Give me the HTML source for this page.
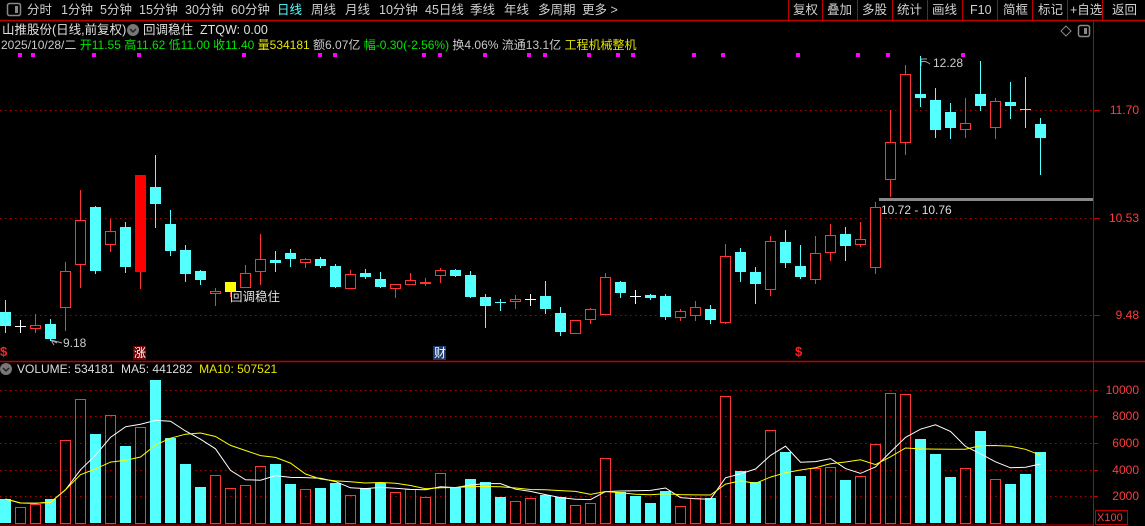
<!DOCTYPE html>
<html><head><meta charset="utf-8">
<style>
*{margin:0;padding:0;box-sizing:border-box}
body{width:1145px;height:526px;background:#000;overflow:hidden;position:relative;font-family:"Liberation Sans","Noto Sans CJK SC",sans-serif;color:#c8c8c8}
.t{position:absolute;white-space:nowrap;font-size:12px;line-height:14px}
.m{position:absolute;top:3px;font-size:12.5px;line-height:14px;color:#d0d0d0;white-space:nowrap}
.g{color:#00e600}.y{color:#e6e600}.w{color:#e0e0e0}
.ax{position:absolute;color:#ff3c3c;font-size:12px;text-align:right;width:45px;right:6px}
</style></head><body>
<svg width="1145" height="526" style="position:absolute;left:0;top:0" id="s">
<rect x="7.5" y="3.5" width="13" height="12" rx="2" fill="none" stroke="#888" stroke-width="1.5"/>
<rect x="15" y="6" width="3" height="7" fill="#888"/>
<line x1="0" y1="20.5" x2="1145" y2="20.5" stroke="#c00000" stroke-width="1.5"/>
<line x1="1093.5" y1="20" x2="1093.5" y2="526" stroke="#c00000"/>
<line x1="0" y1="361.5" x2="1145" y2="361.5" stroke="#c00000" stroke-width="1.5"/>
<line x1="0" y1="525" x2="1093" y2="525" stroke="#c00000"/>
<g stroke="#b00000" stroke-dasharray="1.5,3.5">
<line x1="0" y1="110.5" x2="1093" y2="110.5"/><line x1="0" y1="218.5" x2="1093" y2="218.5"/><line x1="0" y1="315.5" x2="1093" y2="315.5"/>
<line x1="0" y1="390.5" x2="1093" y2="390.5"/><line x1="0" y1="416.5" x2="1093" y2="416.5"/><line x1="0" y1="443.5" x2="1093" y2="443.5"/><line x1="0" y1="470.5" x2="1093" y2="470.5"/><line x1="0" y1="496.5" x2="1093" y2="496.5"/>
</g>
<g stroke="#c00000">
<line x1="1093" y1="110.5" x2="1100" y2="110.5"/><line x1="1093" y1="218.5" x2="1100" y2="218.5"/><line x1="1093" y1="315.5" x2="1100" y2="315.5"/>
<line x1="1093" y1="390.5" x2="1098" y2="390.5"/><line x1="1093" y1="416.5" x2="1098" y2="416.5"/><line x1="1093" y1="443.5" x2="1098" y2="443.5"/><line x1="1093" y1="470.5" x2="1098" y2="470.5"/><line x1="1093" y1="496.5" x2="1098" y2="496.5"/>
</g>
<g stroke="#c00000">
<line x1="788.5" y1="0" x2="788.5" y2="20"/><line x1="822.5" y1="0" x2="822.5" y2="20"/><line x1="857.5" y1="0" x2="857.5" y2="20"/><line x1="892.5" y1="0" x2="892.5" y2="20"/><line x1="927.5" y1="0" x2="927.5" y2="20"/><line x1="962.5" y1="0" x2="962.5" y2="20"/><line x1="997.5" y1="0" x2="997.5" y2="20"/><line x1="1032.5" y1="0" x2="1032.5" y2="20"/><line x1="1067.5" y1="0" x2="1067.5" y2="20"/><line x1="1102.5" y1="0" x2="1102.5" y2="20"/>
</g>
<path d="M1066 26 L1071 31 L1066 36 L1061 31 Z" fill="none" stroke="#888"/>
<rect x="1078.5" y="25.5" width="11" height="11" rx="2" fill="none" stroke="#888" stroke-width="1.5"/><rect x="1084" y="28" width="3" height="6" fill="#888"/>
<circle cx="133" cy="30" r="6" fill="#777"/><path d="M130 29 L133 32 L136 29" fill="none" stroke="#222" stroke-width="1.5"/>
<circle cx="6" cy="369" r="6" fill="#777"/><path d="M3 368 L6 371 L9 368" fill="none" stroke="#222" stroke-width="1.5"/>
<rect x="879" y="198" width="214" height="3" fill="#888"/>
<rect x="1095.5" y="510.5" width="32" height="14" fill="none" stroke="#c00000"/>
<rect x="133" y="346" width="13" height="14" fill="#700000"/>
<rect x="433" y="346" width="13" height="14" fill="#1a3a70"/>
<path d="M921 66 L921 59 L927 59 M921 62 Q925 60 930 64" fill="none" stroke="#aaa"/>
<path d="M57 343 L51 340 M51 340 L54 345 M51 340 L62 343" fill="none" stroke="#aaa"/>
<g id="dots" fill="#ff00ff"></g>
<g id="cd"></g><g id="vb"></g>
<polyline id="m5" fill="none" stroke="#fff" stroke-width="1"/>
<polyline id="m10" fill="none" stroke="#ffff00" stroke-width="1"/>
</svg>
<div class="m" style="left:27px">分时</div><div class="m" style="left:61px">1分钟</div><div class="m" style="left:100px">5分钟</div><div class="m" style="left:139px">15分钟</div><div class="m" style="left:185px">30分钟</div><div class="m" style="left:231px">60分钟</div><div class="m" style="left:277px;color:#54ffff">日线</div><div class="m" style="left:311px">周线</div><div class="m" style="left:345px">月线</div><div class="m" style="left:379px">10分钟</div><div class="m" style="left:425px">45日线</div><div class="m" style="left:470px">季线</div><div class="m" style="left:504px">年线</div><div class="m" style="left:538px">多周期</div><div class="m" style="left:582px">更多 &gt;</div>
<div class="m" style="left:793px">复权</div><div class="m" style="left:827px">叠加</div><div class="m" style="left:862px">多股</div><div class="m" style="left:897px">统计</div><div class="m" style="left:932px">画线</div><div class="m" style="left:970px">F10</div><div class="m" style="left:1003px">简框</div><div class="m" style="left:1038px">标记</div><div class="m" style="left:1070px">+自选</div><div class="m" style="left:1112px">返回</div>
<div class="t w" style="left:2px;top:23px;font-size:12.5px">山推股份(日线,前复权)</div>
<div class="t w" style="left:143px;top:23px;font-size:12.5px">回调稳住&nbsp; ZTQW: 0.00</div>
<div class="t" style="left:1px;top:38px;font-size:12px">2025/10/28/二 <span class="g">开11.55 高11.62 低11.00 收11.40</span> <span class="y">量534181</span> 额6.07亿 <span class="g">幅-0.30(-2.56%)</span> 换4.06% 流通13.1亿 <span class="y">工程机械整机</span></div>
<div class="t" style="left:933px;top:56px;color:#ccc">12.28</div>
<div class="t" style="left:63px;top:336px;color:#ccc">9.18</div>
<div class="t" style="left:881px;top:203px;color:#ddd">10.72 - 10.76</div>
<div class="t w" style="left:230px;top:290px;font-size:12.5px">回调稳住</div>
<div class="t" style="left:0px;top:345px;color:#ff2020;font-weight:bold;font-size:13px">$</div>
<div class="t" style="left:795px;top:345px;color:#ff2020;font-weight:bold;font-size:13px">$</div>
<div class="t" style="left:134px;top:346px;color:#fff">涨</div>
<div class="t" style="left:434px;top:346px;color:#fff">财</div>
<div class="t" style="left:17px;top:362px;color:#ddd">VOLUME: 534181&nbsp; MA5: 441282&nbsp; <span class="y">MA10: 507521</span></div>
<div class="ax" style="top:103px">11.70</div><div class="ax" style="top:211px">10.53</div><div class="ax" style="top:308px">9.48</div>
<div class="ax" style="top:383px">10000</div><div class="ax" style="top:409px">8000</div><div class="ax" style="top:436px">6000</div><div class="ax" style="top:463px">4000</div><div class="ax" style="top:489px">2000</div>
<div class="t" style="left:1097px;top:511px;color:#ff3c3c;font-size:11px">X100</div>
<script>
var C=[[300,312,326,333,'c'],[320,326,326,333,'w'],[314,325,328,333,'r'],[319,324,339,341,'c'],[262,271,307,331,'r'],[190,220,264,288,'r'],[206,207,271,274,'c'],[219,231,244,252,'r'],[222,227,267,273,'c'],[175,175,272,289,'R'],[155,187,204,228,'c'],[210,224,251,256,'c'],[245,250,274,282,'c'],[270,271,280,285,'c'],[288,291,293,306,'r'],[282,282,292,297,'y'],[265,273,287,287,'r'],[234,259,271,285,'r'],[251,260,263,272,'c'],[249,253,259,267,'c'],
[258,259,262,268,'r'],[257,259,266,268,'c'],[264,266,287,288,'c'],[270,274,288,288,'r'],[269,273,277,279,'c'],[272,279,287,288,'c'],[284,284,288,298,'r'],[273,280,284,285,'r'],[278,282,283,286,'r'],[268,270,275,283,'r'],[269,270,276,277,'c'],[271,275,297,298,'c'],[294,297,306,328,'c'],[299,302,303,311,'c'],[295,299,301,309,'r'],[294,299,299,306,'w'],[281,296,309,314,'c'],[307,313,332,336,'c'],[320,320,333,333,'r'],[308,309,319,324,'r'],
[273,277,314,314,'r'],[281,282,293,298,'c'],[290,296,296,304,'w'],[294,295,298,300,'c'],[294,296,317,320,'c'],[309,311,317,321,'r'],[301,307,315,321,'r'],[305,309,320,324,'c'],[244,256,322,324,'r'],[248,252,272,282,'c'],[267,272,284,304,'c'],[236,241,289,296,'r'],[230,242,263,268,'c'],[245,266,277,279,'c'],[236,253,279,284,'r'],[224,235,252,261,'r'],[227,234,246,261,'c'],[222,239,244,247,'r'],[202,207,267,274,'r'],[110,142,179,197,'r'],
[65,74,142,155,'r'],[56,94,98,107,'c'],[88,100,130,138,'c'],[103,112,128,139,'c'],[98,123,129,138,'r'],[61,94,106,111,'c'],[98,101,127,139,'r'],[82,102,106,119,'c'],[77,109,110,128,'c'],[118,124,138,175,'c']];
var V=[[499,'c'],[507,'r'],[504,'r'],[499,'c'],[440,'r'],[399,'r'],[434,'c'],[415,'r'],[446,'c'],[427,'r'],[380,'c'],[438,'c'],[464,'c'],[487,'c'],[475,'r'],[488,'r'],[485,'r'],[466,'r'],[464,'c'],[484,'c'],[489,'r'],[488,'c'],[483,'c'],[495,'r'],[488,'c'],[483,'c'],[492,'r'],[489,'r'],[497,'r'],[473,'r'],[487,'c'],[479,'c'],[482,'c'],[497,'c'],[501,'r'],[498,'r'],[495,'c'],[497,'c'],[505,'r'],[503,'r'],[458,'r'],[492,'c'],[496,'c'],[503,'c'],[491,'c'],[506,'r'],[498,'r'],[498,'c'],[396,'r'],[471,'c'],[482,'c'],[430,'r'],[452,'c'],[476,'c'],[468,'r'],[467,'r'],[480,'c'],[476,'r'],[444,'r'],[393,'r'],[394,'r'],[439,'c'],[454,'c'],[477,'c'],[468,'r'],[431,'c'],[479,'r'],[484,'c'],[474,'c'],[452,'c']];
var ns='http://www.w3.org/2000/svg';
function el(p,t,a){var e=document.createElementNS(ns,t);for(var k in a)e.setAttribute(k,a[k]);p.appendChild(e);return e;}
var cd=document.getElementById('cd'),vb=document.getElementById('vb'),RED='#ff3434',CY='#54ffff';
C.forEach(function(d,i){var x=15*i,cx=x+5.5,t=d[4];
 var col=(t=='c'||t=='x')?CY:(t=='w'?'#fff':RED);
 el(cd,'line',{x1:cx,y1:d[0],x2:cx,y2:d[3],stroke:col});
 if(t=='w'){el(cd,'line',{x1:x,y1:d[1]+.5,x2:x+11,y2:d[1]+.5,stroke:'#fff'});}
 else if(t=='c'){el(cd,'rect',{x:x,y:d[1],width:11,height:Math.max(1,d[2]-d[1]),fill:CY});}
 else if(t=='R'){el(cd,'rect',{x:x,y:d[1],width:11,height:d[2]-d[1],fill:'#ff0000'});}
 else if(t=='y'){el(cd,'rect',{x:x,y:d[1],width:11,height:d[2]-d[1],fill:'#ffff00'});}
 else{el(cd,'rect',{x:x+.5,y:d[1]+.5,width:10,height:Math.max(1,d[2]-d[1]),fill:'#000',stroke:RED});}
});
var h=[];
V.forEach(function(d,i){var x=15*i;h.push(523-d[0]);
 if(d[1]=='c')el(vb,'rect',{x:x,y:d[0],width:11,height:523-d[0],fill:CY});
 else el(vb,'rect',{x:x+.5,y:d[0]+.5,width:10,height:523-d[0],fill:'none',stroke:RED});
});
function ma(n){var p=[];for(var i=0;i<h.length;i++){var s=0,c=0;for(var j=Math.max(0,i-n+1);j<=i;j++){s+=h[j];c++;}p.push((15*i+5.5)+','+(523-s/c).toFixed(1));}return p.join(' ');}
document.getElementById('m5').setAttribute('points',ma(5));
document.getElementById('m10').setAttribute('points',ma(10));
var dg=document.getElementById('dots');
[20,33,94,139,244,320,335,424,440,485,529,545,589,618,633,694,723,798,858,888,963].forEach(function(x){el(dg,'rect',{x:x-2,y:53,width:4,height:4});});
</script>
</body></html>
